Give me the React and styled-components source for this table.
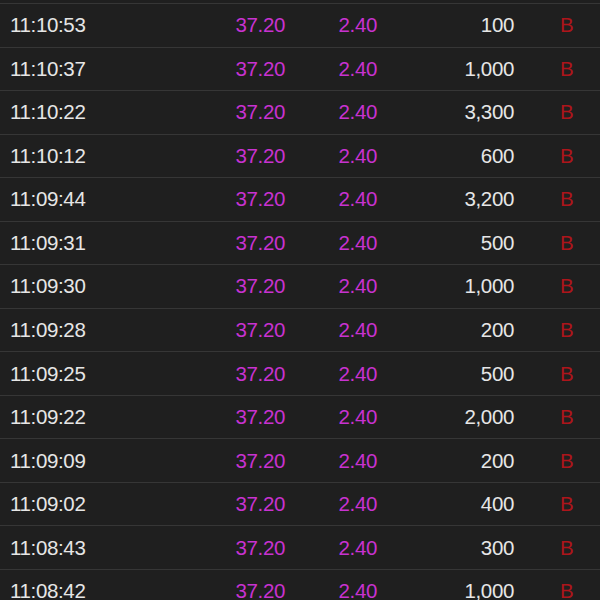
import React from "react";
import styled, { createGlobalStyle } from "styled-components";

const GlobalStyle = createGlobalStyle`
  html, body {
    margin: 0;
    padding: 0;
    background: #1f1f1f;
  }
  body {
    font-family: "Liberation Sans", Arial, sans-serif;
    overflow: hidden;
  }
`;

const List = styled.div`
  padding-top: 3px;
  width: 600px;
  height: 600px;
  overflow: hidden;
  background: #1f1f1f;
`;

const Row = styled.div`
  display: grid;
  grid-template-columns: 175px 100px 92px 137px 1fr;
  align-items: center;
  box-sizing: border-box;
  height: 43.54px;
  padding-left: 10px;
  border-top: 1px solid #363636;
  font-size: 20.5px;
  letter-spacing: -0.35px;
`;

const Cell = styled.div`
  color: ${(p) => p.color || "#e6e6e6"};
  text-align: ${(p) => p.align || "left"};
  padding-left: ${(p) => p.pl || 0}px;
  white-space: nowrap;
`;

const trades = [
  ["11:10:53", "100"],
  ["11:10:37", "1,000"],
  ["11:10:22", "3,300"],
  ["11:10:12", "600"],
  ["11:09:44", "3,200"],
  ["11:09:31", "500"],
  ["11:09:30", "1,000"],
  ["11:09:28", "200"],
  ["11:09:25", "500"],
  ["11:09:22", "2,000"],
  ["11:09:09", "200"],
  ["11:09:02", "400"],
  ["11:08:43", "300"],
  ["11:08:42", "1,000"],
];

export default function App() {
  return (
    <>
      <GlobalStyle />
      <List>
        {trades.map(([time, vol]) => (
          <Row key={time}>
            <Cell>{time}</Cell>
            <Cell color="#c832d0" align="right">37.20</Cell>
            <Cell color="#c832d0" align="right">2.40</Cell>
            <Cell align="right">{vol}</Cell>
            <Cell color="#ad151b" pl={46}>B</Cell>
          </Row>
        ))}
      </List>
    </>
  );
}
